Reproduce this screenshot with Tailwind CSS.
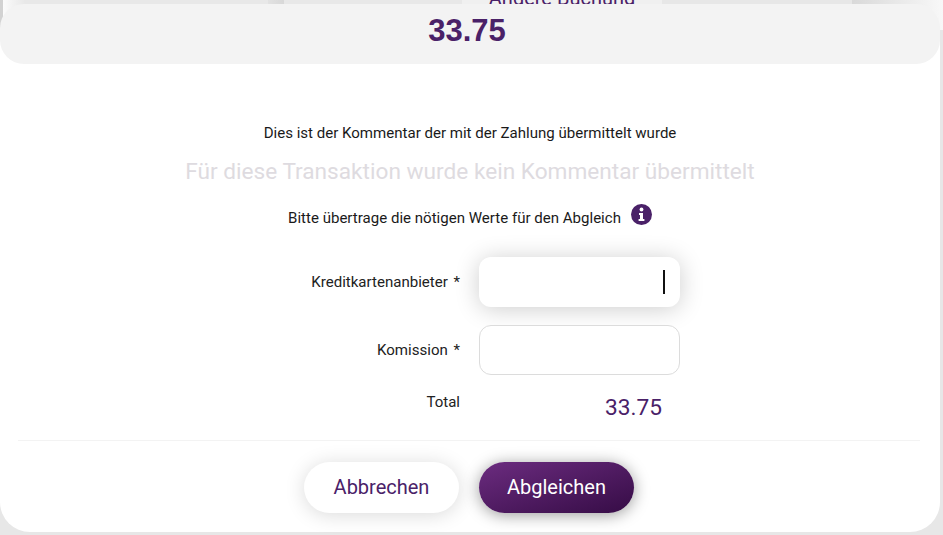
<!doctype html>
<html>
<head>
<meta charset="utf-8">
<script src="https://cdn.jsdelivr.net/npm/@tailwindcss/browser@4"></script>
</head>
<body class="m-0 font-['Roboto',sans-serif]">
<div class="relative w-[943px] h-[535px] overflow-hidden bg-[#e7e7e7]">
  <div class="flex h-[30px] w-full">
    <div class="w-[3px] bg-[#d2d2d2]"></div>
    <div class="w-[22px] bg-linear-to-r from-[#fbfbfb] to-[#e8e8e8]"></div>
    <div class="w-[243px] bg-[#e8e8e8]"></div>
    <div class="w-[16px] bg-linear-to-r from-[#e2e2e2] to-[#d8d8d8]"></div>
    <div class="w-[178px] bg-[#e8e8e8]"></div>
    <div class="w-[200px] bg-[#f0f0f0] text-center overflow-hidden relative"><span class="absolute left-0 right-0 top-[-16px] text-[20px] leading-[28px] text-[#4a2168]">Andere Buchung</span></div>
    <div class="w-[190px] bg-[#e7e7e7]"></div>
    <div class="flex-1 bg-linear-to-r from-[#d9d9d9] to-[#f8f8f8]"></div>
  </div>
  <div class="absolute left-0 top-[4px] w-[940px] h-[528px] bg-white rounded-[30px] flex flex-col">
    <div class="h-[60px] bg-[#f3f3f3] rounded-[24px] flex items-center justify-center">
      <span class="text-[31px] font-bold text-[#4a2168] font-['Liberation_Sans',sans-serif] leading-none mr-[6px] mb-[8px]">33.75</span>
    </div>
    <div class="flex flex-col items-center pt-[60px]">
      <p class="text-[15.05px] leading-[18px] text-[#1a1a1a]">Dies ist der Kommentar der mit der Zahlung übermittelt wurde</p>
      <p class="mt-[15px] text-[22.65px] leading-[30px] text-[#dedbe0]">Für diese Transaktion wurde kein Kommentar übermittelt</p>
      <div class="mt-[22px] flex items-start">
        <p class="text-[15.05px] leading-[18px] text-[#1a1a1a]">Bitte übertrage die nötigen Werte für den Abgleich</p>
        <svg class="ml-[10px] mt-[-5px] w-[21px] h-[21px]" viewBox="0 0 21 21"><circle cx="10.5" cy="10.5" r="10.5" fill="#4a2168"/><circle cx="10.5" cy="5.5" r="1.9" fill="#fff"/><path d="M8 9h4v6h1.4v2H7.6v-2H9v-4H8z" fill="#fff"/></svg>
      </div>
    </div>
    <div class="mt-[30px] ml-[310px] flex items-center">
      <label class="w-[150px] text-right text-[15.05px] text-[#222]">Kreditkartenanbieter <span class="ml-[2px]">*</span></label>
      <div class="ml-[19px] w-[201px] h-[50px] rounded-[12px] bg-white shadow-[0_2px_24px_rgba(0,0,0,0.2)] flex items-center justify-end pr-[15px]"><span class="block w-[2px] h-[24px] bg-[#111]"></span></div>
    </div>
    <div class="mt-[18px] ml-[310px] flex items-center">
      <label class="w-[150px] text-right text-[15.05px] text-[#222]">Komission <span class="ml-[2px]">*</span></label>
      <div class="ml-[19px] w-[201px] h-[50px] rounded-[12px] bg-white border-[1.5px] border-[#dcdcdc]"></div>
    </div>
    <div class="mt-[18px] ml-[310px] flex items-start">
      <label class="w-[150px] text-right text-[15.05px] leading-[18px] text-[#222]">Total</label>
      <span class="ml-[145px] mt-[1px] text-[22.7px] leading-[27px] text-[#4a2168]">33.75</span>
    </div>
    <div class="mt-[19px] ml-[18px] mr-[20px] border-t border-[#f3f3f3]"></div>
    <div class="mt-[21px] mr-[2px] flex justify-center gap-[20px]">
      <button class="w-[155px] h-[51px] pb-[2px] rounded-full bg-white text-[20px] text-[#4a2168] shadow-[0_2px_20px_rgba(0,0,0,0.15)]">Abbrechen</button>
      <button class="w-[155px] h-[51px] pb-[2px] rounded-full bg-linear-to-br from-[#6c2c80] to-[#360c46] text-[20px] text-white shadow-[0_2px_16px_rgba(0,0,0,0.4)]">Abgleichen</button>
    </div>
  </div>
</div>
</body>
</html>
